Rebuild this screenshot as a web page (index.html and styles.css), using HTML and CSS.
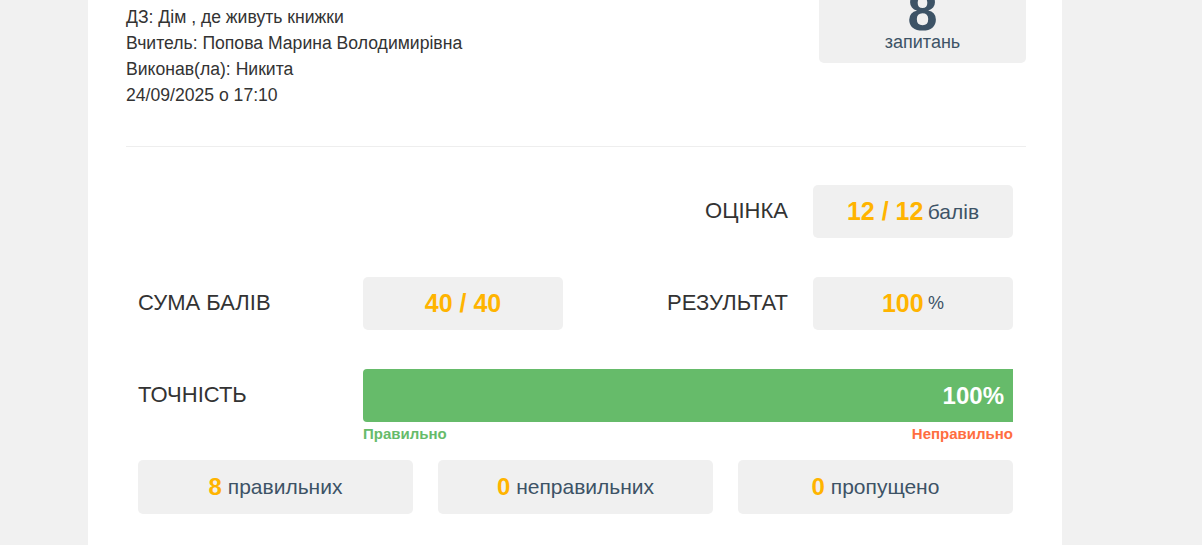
FILE: index.html
```html
<!DOCTYPE html>
<html lang="uk">
  <head>
    <meta charset="UTF-8" />
    <meta name="viewport" content="width=device-width, initial-scale=1.0" />
    <title>Результат</title>
    <link rel="stylesheet" href="styles.css">
  </head>
  <body>
    <div class="card">
      <div class="head">
        <div class="info">
          <p>ДЗ: Дім , де живуть книжки</p>
          <p>Вчитель: Попова Марина Володимирівна</p>
          <p>Виконав(ла): Никита</p>
          <p>24/09/2025 о 17:10</p>
        </div>
        <div class="count">
          <div class="count-num">8</div>
          <div class="count-label">запитань</div>
        </div>
      </div>

      <hr class="divider" />

      <div class="score">
        <div class="score-grid">
          <div class="label label-right col-3">ОЦІНКА</div>
          <div class="box"><span class="num">12 / 12</span>&nbsp;<span class="unit">балів</span></div>

          <div class="label">СУМА БАЛІВ</div>
          <div class="box"><span class="num">40 / 40</span></div>
          <div class="label label-right">РЕЗУЛЬТАТ</div>
          <div class="box"><span class="num">100</span>&nbsp;<span class="unit small">%</span></div>

          <div class="label">ТОЧНІСТЬ</div>
          <div class="accuracy">
            <div class="bar">100%</div>
            <div class="legend">
              <span class="ok">Правильно</span>
              <span class="bad">Неправильно</span>
            </div>
          </div>
        </div>

        <div class="totals">
          <div class="total"><span class="num">8</span>&nbsp;правильних</div>
          <div class="total"><span class="num">0</span>&nbsp;неправильних</div>
          <div class="total"><span class="num">0</span>&nbsp;пропущено</div>
        </div>
      </div>
    </div>
  </body>
</html>
```

FILE: styles.css
```css
body {
  margin: 0;
  font-family: "Liberation Sans", Arial, sans-serif;
  background: #f1f1f1;
  color: #333;
}
.card {
  width: 974px;
  box-sizing: border-box;
  margin: -42px 0 0 88px;
  padding: 0 36px 40px 38px;
  background: #fff;
}
.head {
  display: flex;
  justify-content: space-between;
  align-items: flex-start;
}
.info {
  padding-top: 46px;
}
.info p {
  margin: 0;
  font-size: 17.6px;
  line-height: 26px;
  color: #333;
}
.count {
  width: 207px;
  box-sizing: border-box;
  padding: 33px 0 10px;
  background: #f0f0f0;
  border-radius: 0 0 5px 5px;
  text-align: center;
  color: #3d5366;
}
.count-num {
  font-size: 54px;
  font-weight: bold;
  line-height: 40px;
}
.count-label {
  font-size: 18px;
  line-height: 22px;
}
.divider {
  margin: 38px 0 0;
  border: none;
  border-top: 1px solid #eee;
}
.score {
  padding: 38px 13px 0 12px;
}
.score-grid {
  display: grid;
  grid-template-columns: repeat(4, 200px);
  column-gap: 25px;
  row-gap: 39px;
  align-items: start;
}
.label {
  font-size: 22px;
  line-height: 51px;
  color: #333;
}
.label-right {
  text-align: right;
}
.col-3 {
  grid-column: 3;
}
.box {
  height: 53px;
  display: flex;
  justify-content: center;
  align-items: center;
  background: #f0f0f0;
  border-radius: 5px;
  color: #3d5366;
}
.num {
  color: #ffb400;
  font-weight: bold;
  font-size: 25px;
}
.unit {
  font-size: 21px;
}
.unit.small {
  font-size: 18px;
}
.accuracy {
  grid-column: 2 / span 3;
}
.bar {
  height: 53px;
  display: flex;
  justify-content: flex-end;
  align-items: center;
  padding-right: 9px;
  background: #66bb6a;
  border-radius: 4px 0 0 4px;
  color: #fff;
  font-size: 24px;
  font-weight: bold;
}
.legend {
  display: flex;
  justify-content: space-between;
  margin-top: 3px;
  font-size: 15px;
  line-height: 17px;
  font-weight: bold;
}
.legend .ok {
  color: #66bb6a;
}
.legend .bad {
  color: #ff6e40;
}
.totals {
  display: grid;
  grid-template-columns: repeat(3, 1fr);
  gap: 25px;
  margin-top: 18px;
}
.total {
  height: 54px;
  display: flex;
  justify-content: center;
  align-items: center;
  background: #f0f0f0;
  border-radius: 5px;
  font-size: 21px;
  color: #3d5366;
}
.total .num {
  font-size: 24px;
}
```
